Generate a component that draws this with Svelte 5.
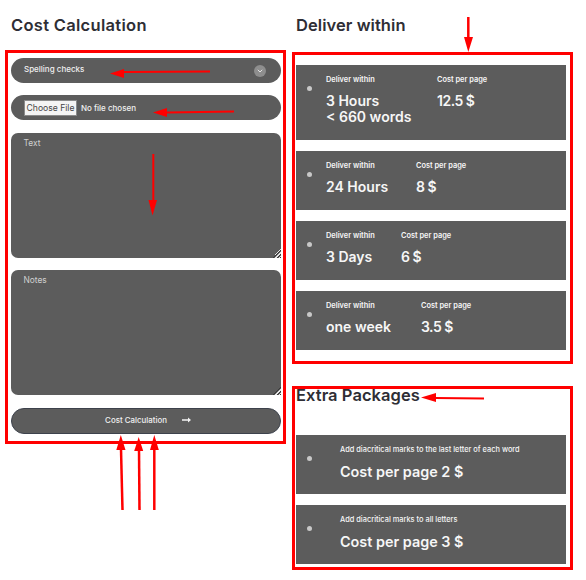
<script>
  const deliveries = [
    { time: ["3 Hours", "< 660 words"], price: "12.5 $", width: 111 },
    { time: ["24 Hours"], price: "8 $", width: 90 },
    { time: ["3 Days"], price: "6 $", width: 75 },
    { time: ["one week"], price: "3.5 $", width: 95 },
  ];

  const extras = [
    { label: "Add diacritical marks to the last letter of each word", price: "Cost per page 2 $" },
    { label: "Add diacritical marks to all letters", price: "Cost per page 3 $" },
  ];
</script>

<div class="page">
  <section class="left">
    <h2 class="title cost-title">Cost Calculation</h2>
    <form class="red-box form" on:submit|preventDefault>
      <div class="pill select">
        <span>Spelling checks</span>
        <span class="chevron">
          <svg width="6" height="4" viewBox="0 0 6 4" fill="none">
            <path d="M0.8 0.8 L3 3 L5.2 0.8" stroke="#e4e4e4" stroke-width="1" />
          </svg>
        </span>
      </div>
      <div class="pill file">
        <input type="file" />
      </div>
      <textarea class="area" placeholder="Text"></textarea>
      <textarea class="area notes" placeholder="Notes"></textarea>
      <button class="submit" type="submit">
        <span>Cost Calculation</span>
        <svg width="9" height="6" viewBox="0 0 9 6" fill="#f2f2f2">
          <path d="M0 2.2 H6 V0.4 L9 3 L6 5.6 V3.8 H0 Z" />
        </svg>
      </button>
    </form>
  </section>

  <section class="right">
    <h2 class="title">Deliver within</h2>
    <div class="red-box deliver">
      {#each deliveries as item}
        <div class="card">
          <span class="dot"></span>
          <div class="col" style="width: {item.width}px">
            <div class="label">Deliver within</div>
            <div class="value">
              {#each item.time as line}
                <div>{line}</div>
              {/each}
            </div>
          </div>
          <div class="col">
            <div class="label">Cost per page</div>
            <div class="value price">{item.price}</div>
          </div>
        </div>
      {/each}
    </div>

    <div class="red-box extras">
      <h2 class="title extra-title">Extra Packages</h2>
      {#each extras as item}
        <div class="card extra">
          <span class="dot"></span>
          <div class="col">
            <div class="label">{item.label}</div>
            <div class="value big">{item.price}</div>
          </div>
        </div>
      {/each}
    </div>
  </section>

  <svg class="arrows" width="586" height="580" viewBox="0 0 586 580" fill="#ff0000" stroke="none">
    <path d="M124 72 L210 71.5" stroke="#ff0000" stroke-width="2" />
    <path d="M110 73.5 L124 69 V78 Z" />
    <path d="M167 112.5 L234 111.5" stroke="#ff0000" stroke-width="2" />
    <path d="M153 112.5 L167 108 V117 Z" />
    <path d="M153.3 154 V202" stroke="#ff0000" stroke-width="2" />
    <path d="M152.5 215.5 L148.5 200 H157 Z" />
    <path d="M122.5 510 L121 449" stroke="#ff0000" stroke-width="2.5" />
    <path d="M120.8 435 L116.3 450 H125.5 Z" />
    <path d="M139.5 510 L139 449" stroke="#ff0000" stroke-width="2.5" />
    <path d="M138.7 437 L134.2 451 H143.2 Z" />
    <path d="M154.3 510 V449" stroke="#ff0000" stroke-width="2.5" />
    <path d="M154.3 435 L150 450 H158.8 Z" />
    <path d="M468.3 17 V38" stroke="#ff0000" stroke-width="2.5" />
    <path d="M468.3 52 L464 37 H473 Z" />
    <path d="M435 398 L484 398.5" stroke="#ff0000" stroke-width="2" />
    <path d="M421 397.5 L436 393 V402 Z" />
  </svg>
</div>

<style>
  :global(body) {
    margin: 0;
    background: #fff;
  }

  .page {
    position: relative;
    width: 586px;
    height: 580px;
    display: flex;
    align-items: flex-start;
    font-family: "Inter", "Open Sans", sans-serif;
    overflow: hidden;
  }

  .left {
    width: 281px;
    margin-left: 5px;
  }

  .right {
    width: 281px;
    margin-left: 6px;
  }

  .title {
    margin: 0;
    font-size: 16.5px;
    line-height: 22px;
    font-weight: 600;
    letter-spacing: 0.06px;
    color: #2e2e35;
    padding: 14px 0 0 4px;
    height: 36px;
    box-sizing: content-box;
  }

  .cost-title {
    padding-left: 6px;
    letter-spacing: 0.3px;
  }

  .red-box {
    border: 3px solid #ff0000;
    box-sizing: border-box;
  }

  .form {
    height: 394px;
    padding: 5px 2px 0 3px;
    display: flex;
    flex-direction: column;
  }

  .pill {
    height: 25px;
    border-radius: 13px;
    background: #5c5c5c;
    color: #f0f0f0;
    font-size: 8px;
    display: flex;
    align-items: center;
    box-sizing: border-box;
    padding: 0 15px 0 13px;
  }

  .select {
    justify-content: space-between;
    margin-bottom: 12px;
  }

  .select > span:first-child {
    position: relative;
    top: -2px;
    font-weight: 500;
  }

  .chevron {
    width: 12px;
    height: 12px;
    border-radius: 50%;
    background: #8e8e8e;
    display: flex;
    align-items: center;
    justify-content: center;
  }

  .file {
    margin-bottom: 13px;
  }

  .file input {
    font: 500 8px "Inter", sans-serif;
    color: #f0f0f0;
    width: 200px;
  }

  .file input::file-selector-button {
    font: 400 8.6px "Inter", sans-serif;
    width: 53px;
    height: 16px;
    padding: 0;
    margin-right: 4px;
    color: #444;
    background: #f4f4f4;
    border: 1px solid #8a8a8a;
  }

  .area {
    display: block;
    width: 100%;
    height: 125px;
    flex: none;
    margin: 0 0 12px;
    padding: 4px 12.5px;
    box-sizing: border-box;
    background: #5c5c5c;
    color: #eee;
    border: none;
    border-radius: 7px;
    font: 400 8.4px/12px "Inter", sans-serif;
    outline: none;
  }

  .area::placeholder {
    color: #d0d0d0;
    opacity: 1;
  }

  .area::-webkit-resizer {
    background:
      linear-gradient(135deg, #5c5c5c 50%, transparent 50%) right bottom / 9px 9px no-repeat,
      repeating-linear-gradient(135deg, #e6e6e6 0 0.8px, #3a3a3a 0.8px 1.5px, #5c5c5c 1.5px 2.8px) right bottom / 9px 9px no-repeat;
  }

  .notes {
    margin-bottom: 13px;
  }

  .submit {
    height: 26px;
    width: 100%;
    border: 1px solid #3d424c;
    border-radius: 13px;
    background: #5c5c5c;
    color: #f0f0f0;
    font: 500 7.9px "Inter", sans-serif;
    display: flex;
    align-items: center;
    justify-content: center;
    gap: 15px;
    padding: 0 0 3px 4px;
  }

  .deliver {
    height: 312px;
    margin-top: 2px;
    padding: 10px 4px 0 1px;
    display: flex;
    flex-direction: column;
    gap: 11px;
  }

  .card {
    background: #5c5c5c;
    color: #f6f6f6;
    min-height: 59px;
    padding: 9px 0 0 11px;
    display: flex;
    align-items: flex-start;
    box-sizing: border-box;
  }

  .card:first-child {
    height: 75px;
  }

  .dot {
    width: 5px;
    height: 5px;
    border-radius: 50%;
    background: #c8c8c8;
    margin-top: 12px;
    margin-right: 14px;
    flex: none;
  }

  .label {
    font-size: 7.4px;
    font-weight: 600;
    line-height: 12px;
    white-space: nowrap;
  }

  .value {
    font-size: 14px;
    font-weight: 600;
    line-height: 16px;
    margin-top: 7px;
    white-space: nowrap;
  }

  .price {
    letter-spacing: -0.5px;
  }

  .extras {
    height: 184px;
    margin-top: 22px;
    padding: 0 4px 0 1px;
    display: flex;
    flex-direction: column;
    gap: 11px;
  }

  .extra-title {
    height: 45px;
    padding: 0;
    margin-top: -2px;
    margin-bottom: -8px;
    line-height: 17px;
  }

  .extra .dot {
    margin-right: 28px;
  }

  .extra .label {
    font-weight: 500;
  }

  .value.big {
    font-size: 14.4px;
    font-weight: 600;
    margin-top: 8px;
  }

  .arrows {
    position: absolute;
    left: 0;
    top: 0;
    pointer-events: none;
  }
</style>
